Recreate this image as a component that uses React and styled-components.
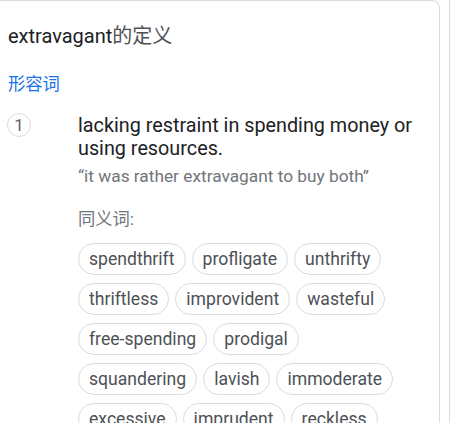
import React from "react";
import styled, { createGlobalStyle } from "styled-components";

const Global = createGlobalStyle`
  html, body { margin: 0; padding: 0; background: #fff; }
  body { font-family: Roboto, "Noto Sans CJK SC", sans-serif; overflow: hidden; }
`;

const Page = styled.div`
  display: flex;
  gap: 9px;
  width: 451px;
  height: 423px;
  overflow: hidden;
`;

const Card = styled.div`
  flex: none;
  width: 441px;
  margin-left: -1px;
  border: 1px solid #dadce0;
  border-bottom: none;
  border-top-right-radius: 8px;
  padding: 15px 0 0 8px;
  box-sizing: border-box;
`;

const NextCard = styled.div`
  flex: 1;
  border: 1px solid #dadce0;
  border-right: none;
  border-bottom: none;
  border-top-left-radius: 8px;
`;

const Title = styled.div`
  font-family: Roboto, "Noto Sans CJK SC", sans-serif;
  font-size: 20px;
  line-height: 40px;
  color: #202124;
`;

const TitleSuffix = styled.span`
  color: #4d5156;
`;

const Pos = styled.div`
  margin-top: 16px;
  font-family: Roboto, "Noto Sans CJK SC", sans-serif;
  font-size: 17.3px;
  line-height: 24px;
  color: #1a73e8;
`;

const Sense = styled.div`
  display: grid;
  grid-template-columns: 70px 1fr;
  margin-top: 18px;
`;

const Num = styled.div`
  width: 24px;
  height: 24px;
  border: 1px solid #dadce0;
  border-radius: 50%;
  box-sizing: border-box;
  display: flex;
  align-items: center;
  justify-content: center;
  font-size: 17px;
  color: #5f6368;
  margin: -1px 0 0 -1px;
`;

const Def = styled.div`
  font-size: 19.8px;
  line-height: 23px;
  color: #202124;
`;

const Example = styled.div`
  font-size: 17.3px;
  line-height: 26px;
  color: #70757a;
  margin-top: 3px;
`;

const SynLabel = styled.div`
  font-family: Roboto, "Noto Sans CJK SC", sans-serif;
  font-size: 17.3px;
  line-height: 26px;
  color: #70757a;
  margin-top: 17px;
`;

const Chips = styled.div`
  display: flex;
  flex-direction: column;
  gap: 8px;
  margin-top: 11px;
`;

const ChipRow = styled.div`
  display: flex;
  gap: 6px;
`;

const Chip = styled.span`
  height: 32px;
  box-sizing: border-box;
  border: 1px solid #dadce0;
  border-radius: 16px;
  padding: 0 10px;
  display: inline-flex;
  align-items: center;
  font-size: 17.6px;
  color: #4d5156;
  white-space: nowrap;
`;

const rows = [
  ["spendthrift", "profligate", "unthrifty"],
  ["thriftless", "improvident", "wasteful"],
  ["free-spending", "prodigal"],
  ["squandering", "lavish", "immoderate"],
  ["excessive", "imprudent", "reckless"],
];

export default function App() {
  return (
    <Page>
      <Global />
      <Card>
        <Title>
          extravagant<TitleSuffix>的定义</TitleSuffix>
        </Title>
        <Pos>形容词</Pos>
        <Sense>
          <Num>1</Num>
          <div>
            <Def>lacking restraint in spending money or using resources.</Def>
            <Example>“it was rather extravagant to buy both”</Example>
            <SynLabel>同义词:</SynLabel>
            <Chips>
              {rows.map((r, i) => (
                <ChipRow key={i}>
                  {r.map((w) => (
                    <Chip key={w}>{w}</Chip>
                  ))}
                </ChipRow>
              ))}
            </Chips>
          </div>
        </Sense>
      </Card>
      <NextCard />
    </Page>
  );
}
